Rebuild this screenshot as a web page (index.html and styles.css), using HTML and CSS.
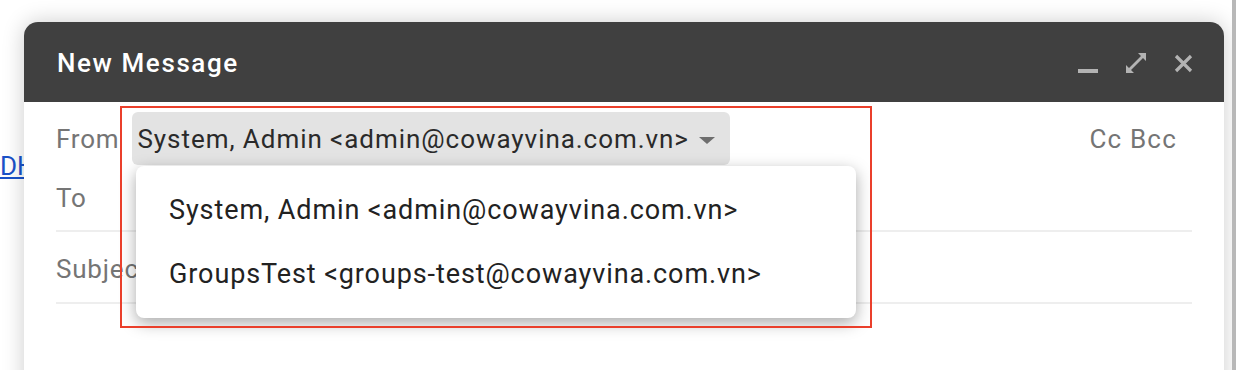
FILE: index.html
```html
<!DOCTYPE html>
<html>
<head>
<meta charset="utf-8">
<link rel="stylesheet" href="styles.css">
</head>
<body>
<div class="page">
  <a class="behind-link" href="#">DH</a>
  <div class="dialog">
    <div class="header">
      <div class="title">New Message</div>
      <div class="actions">
        <svg class="ico" width="20" height="20" viewBox="0 0 20 20"><rect x="0" y="16" width="20" height="4" fill="#b3b3b3"/></svg>
        <svg class="ico" width="20" height="20" viewBox="0 0 20 20"><path d="M12 0H20V8L17 5L5 17L8 20H0V12L3 15L15 3Z" fill="#b3b3b3"/></svg>
        <svg class="ico" width="20" height="20" viewBox="0 0 20 20"><path d="M2 3L17 18M17 3L2 18" stroke="#b3b3b3" stroke-width="3.2"/></svg>
      </div>
    </div>
    <div class="body">
      <div class="row from-row">
        <span class="label">From</span>
        <div class="chip">System, Admin &lt;admin@cowayvina.com.vn&gt;<span class="caret"></span></div>
        <span class="ccbcc">Cc Bcc</span>
      </div>
      <div class="row line-row to-row"><span class="label">To</span></div>
      <div class="row line-row subject-row"><span class="label">Subject</span></div>
      <div class="menu">
        <div class="item">System, Admin &lt;admin@cowayvina.com.vn&gt;</div>
        <div class="item">GroupsTest &lt;groups-test@cowayvina.com.vn&gt;</div>
      </div>
      <div class="highlight"></div>
    </div>
  </div>
  <div class="edge"></div>
</div>
</body>
</html>
```
FILE: styles.css
```css
html, body {
  margin: 0;
  padding: 0;
  background: #ffffff;
  overflow: hidden;
}
.page {
  position: relative;
  width: 1236px;
  height: 370px;
  font-family: Roboto, "Noto Sans", sans-serif;
  overflow: hidden;
}
.behind-link {
  position: absolute;
  left: 0;
  top: 151px;
  font-size: 26px;
  color: #1a52c9;
  text-decoration: underline;
}
.dialog {
  position: absolute;
  left: 24px;
  top: 22px;
  width: 1200px;
  height: 400px;
  background: #fff;
  border-radius: 14px 14px 0 0;
  box-shadow: 0 0 22px rgba(0,0,0,0.2);
}
.header {
  height: 80px;
  background: #404040;
  border-radius: 14px 14px 0 0;
  display: flex;
  align-items: center;
  justify-content: space-between;
  padding: 0 30px 0 33px;
}
.title {
  color: #fff;
  font-size: 26px;
  font-weight: 500;
  letter-spacing: 1.6px;
  margin-top: 2px;
}
.actions {
  display: flex;
  gap: 28px;
  margin-top: 2px;
}
.ico { display: block; }
.body {
  position: relative;
  padding: 10px 32px 0 32px;
}
.row {
  display: flex;
  align-items: center;
  color: #757575;
  font-size: 26px;
  letter-spacing: 0.8px;
}
.from-row {
  height: 53px;
}
.label { display: block; }
.chip {
  margin-left: 13px;
  height: 53px;
  display: flex;
  align-items: center;
  padding: 0 15px 0 5px;
  background: #e3e3e3;
  border-radius: 6px;
  color: #2a2a2a;
  letter-spacing: 0.95px;
}
.caret {
  width: 0;
  height: 0;
  border-left: 8px solid transparent;
  border-right: 8px solid transparent;
  border-top: 7px solid #6e6e6e;
  margin-left: 10px;
  margin-top: 3px;
}
.ccbcc {
  margin-left: auto;
  margin-right: 15px;
  letter-spacing: 1.2px;
}
.line-row {
  border-bottom: 2px solid #eeeeee;
  box-sizing: border-box;
}
.to-row { height: 67px; padding-top: 0; }
.subject-row { height: 72px; padding-top: 4px; }
.menu {
  position: absolute;
  left: 112px;
  top: 64px;
  width: 720px;
  padding: 12px 0;
  background: #fff;
  border-radius: 8px;
  box-shadow: 0 5px 16px rgba(0,0,0,0.34);
  color: #222;
  font-size: 27px;
  letter-spacing: 0.9px;
}
.item {
  height: 64px;
  display: flex;
  align-items: center;
  padding-left: 33px;
}
.highlight {
  position: absolute;
  left: 96px;
  top: 4px;
  width: 748px;
  height: 218px;
  border: 2px solid #ea3f2b;
}
.edge {
  position: absolute;
  right: 0;
  top: 0;
  width: 4px;
  height: 370px;
  background: #b8b8b8;
}
```
